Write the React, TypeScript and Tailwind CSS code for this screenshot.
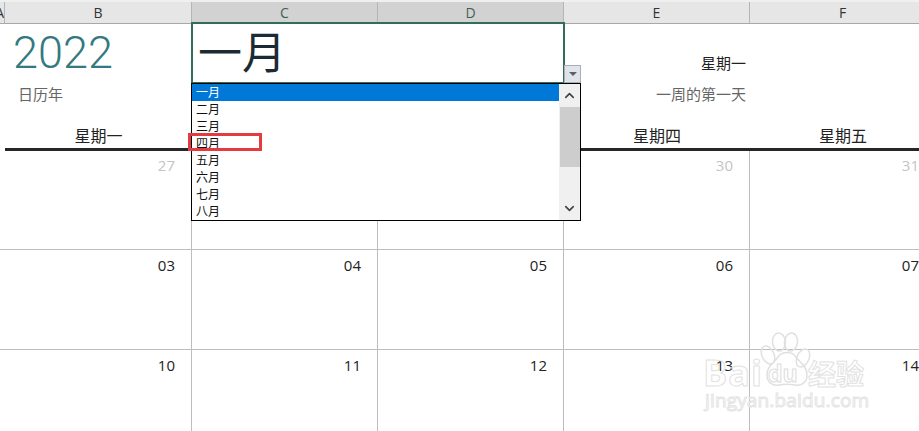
import { ChevronUp, ChevronDown } from "lucide-react";

const months = ["一月", "二月", "三月", "四月", "五月", "六月", "七月", "八月"];
const cols = [
  { l: "B", w: "w-[187px]", active: false },
  { l: "C", w: "w-[186px]", active: true },
  { l: "D", w: "w-[186px]", active: true },
  { l: "E", w: "w-[186px]", active: false },
  { l: "F", w: "w-[186px]", active: false },
];

function DateRow({ vals, h, muted }: { vals: string[]; h: string; muted?: boolean }) {
  return (
    <div className={`flex ${h} border-b border-[#bdbdbd]`}>
      <div className="w-[5px] shrink-0" />
      {vals.map((v, i) => (
        <div
          key={i}
          className={`${cols[i].w} shrink-0 border-r border-[#bdbdbd] flex justify-end pr-[16px] ${muted ? "pt-[4px] text-[#c4c4c4]" : "pt-[5px] text-[#222]"} text-[15px] leading-[20px]`}
        >
          {v}
        </div>
      ))}
    </div>
  );
}

function Watermark() {
  return (
    <div className="absolute left-[703px] top-[332px] w-[190px] h-[95px] pointer-events-none">
      <svg width="190" height="95" viewBox="0 0 190 95" className="absolute left-0 top-0" fill="none" stroke="#e0e0e0" strokeWidth="1.5">
        <ellipse cx="65" cy="23" rx="6" ry="9.5" transform="rotate(-25 65 23)" />
        <ellipse cx="76" cy="10" rx="6.5" ry="9" transform="rotate(-5 76 10)" />
        <ellipse cx="88" cy="10" rx="6.5" ry="9" transform="rotate(8 88 10)" />
        <ellipse cx="100" cy="26" rx="6" ry="9.5" transform="rotate(25 100 26)" />
        <path d="M64 43c0-9 7-12 11-18 4-6 14-6 18 0 4 6 11 9 11 18 0 8-6 11-12 10-6-1-10-1-16 0-6 1-12-2-12-10z" />
      </svg>
      <div className="absolute left-[0px] top-[21px] text-[36px] leading-[40px] font-bold text-transparent [-webkit-text-stroke:1px_#e2e2e2] tracking-[1px]">Bai</div>
      <div className="absolute left-[65px] top-[28px] text-[23px] leading-[26px] font-bold text-transparent [-webkit-text-stroke:1px_#dcdcdc]">du</div>
      <div className="absolute left-[105px] top-[24px] text-[28px] leading-[36px] font-bold text-transparent [-webkit-text-stroke:1px_#e2e2e2]">经验</div>
      <div className="absolute left-[2px] top-[56px] text-[19px] leading-[24px] text-transparent [-webkit-text-stroke:1px_#e4e4e4] tracking-[0.15px]">jingyan.baidu.com</div>
    </div>
  );
}

export default function App() {
  return (
    <div className="relative w-[919px] h-[431px] overflow-hidden bg-white text-black font-['Open_Sans','Noto_Sans_CJK_SC',sans-serif]">
      {/* Column headers */}
      <div className="flex h-[24px] bg-[#e6e6e6] border-b border-[#a8a8a8] border-t-[2px] border-t-[#f0f0f0] text-[14px]">
        <div className="w-[5px] shrink-0 border-r border-[#b5b5b5] flex items-center justify-end overflow-hidden text-[#333]">
          <span className="shrink-0">A</span>
        </div>
        {cols.map((c) => (
          <div
            key={c.l}
            className={`${c.w} shrink-0 border-r border-[#b5b5b5] flex items-center justify-center leading-none ${c.active ? "bg-[#d2d2d2] text-[#3f5f55]" : "text-[#333]"}`}
          >
            {c.l}
          </div>
        ))}
      </div>

      {/* Title band */}
      <div className="flex h-[124px]">
        <div className="w-[5px] shrink-0" />
        <div className="w-[186px] shrink-0 flex flex-col">
          <div className="h-[60px] pl-[8px] pt-[1px] text-[45px] leading-[56px] font-light text-[#33797f] font-['Roboto',sans-serif]">2022</div>
          <div className="h-[24px] pl-[13px] text-[15px] leading-[20px] text-[#666]">日历年</div>
          <div className="mt-auto h-[28px] pt-[4px] pl-[1px] flex items-center justify-center text-[16px] text-[#222]">星期一</div>
        </div>
        <div className="w-[373px] shrink-0">
          <div className="h-[62px] -mt-[2px] -mr-[1px] border-[2px] border-[#2f6f55] pl-[5px] text-[44px] leading-[56px] text-[#1b2b33] relative">一月</div>
        </div>
        <div className="w-[186px] shrink-0 flex flex-col items-stretch">
          <div className="h-[60px] flex items-center justify-end pr-[4px] pt-[18px] text-[15px] text-[#222]">星期一</div>
          <div className="h-[24px] flex justify-end pr-[4px] text-[15px] leading-[20px] text-[#666]">一周的第一天</div>
          <div className="mt-auto h-[28px] pt-[4px] flex items-center justify-center text-[16px] text-[#222]">星期四</div>
        </div>
        <div className="w-[186px] shrink-0 flex flex-col">
          <div className="mt-auto h-[28px] pt-[4px] flex items-center justify-center text-[16px] text-[#222]">星期五</div>
        </div>
      </div>

      {/* Thick rule */}
      <div className="ml-[5px] h-[3px] bg-[#262626]" />

      <DateRow vals={["27", "", "", "30", "31"]} h="h-[99px]" muted />
      <DateRow vals={["03", "04", "05", "06", "07"]} h="h-[100px]" />
      <DateRow vals={["10", "11", "12", "13", "14"]} h="h-[100px]" />

      <Watermark />

      {/* Dropdown arrow button */}
      <div className="absolute left-[564px] top-[65px] w-[17px] h-[18px] bg-[#dfe3ea] border border-[#a9adb5] flex items-center justify-center">
        <div className="w-0 h-0 border-l-[4px] border-r-[4px] border-t-[4px] border-l-transparent border-r-transparent border-t-[#5b6068]" />
      </div>

      {/* Dropdown list */}
      <div className="absolute left-[191px] top-[83px] w-[390px] h-[138px] bg-white border border-black flex overflow-hidden">
        <div className="flex-1 flex flex-col">
          {months.map((m, i) => (
            <div
              key={m}
              className={`h-[17px] pl-[4px] text-[12px] leading-[17px] ${i === 0 ? "bg-[#0078d7] text-white" : "text-[#111]"}`}
            >
              {m}
            </div>
          ))}
        </div>
        <div className="w-[21px] bg-[#f0f0f0] flex flex-col items-center">
          <div className="h-[23px] w-full flex items-center justify-center text-[#404040]">
            <ChevronUp size={15} strokeWidth={2.5} />
          </div>
          <div className="h-[60px] w-[20px] bg-[#cdcdcd]" />
          <div className="mt-auto h-[24px] w-full flex items-center justify-center text-[#404040]">
            <ChevronDown size={15} strokeWidth={2.5} />
          </div>
        </div>
      </div>

      {/* Red annotation */}
      <div className="absolute left-[188px] top-[133px] w-[74px] h-[18px] border-[3px] border-[#e53a40]" />
    </div>
  );
}
